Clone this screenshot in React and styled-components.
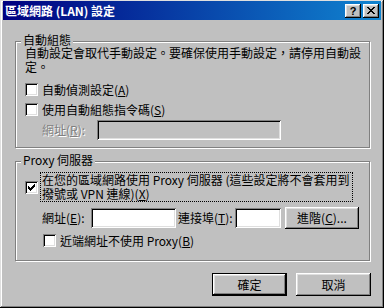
import React from "react";
import styled, { createGlobalStyle, css } from "styled-components";

const GlobalStyle = createGlobalStyle`
  html, body {
    margin: 0;
    padding: 0;
    background: #c0c0c0;
  }
  body {
    font-family: "Noto Sans CJK TC", "Liberation Sans", sans-serif;
    font-size: 12px;
    color: #000;
  }
`;

const raised = css`
  box-shadow: inset -1px -1px #000, inset 1px 1px #fff, inset -2px -2px #808080,
    inset 2px 2px #dfdfdf;
`;

const sunken = css`
  box-shadow: inset 1px 1px #808080, inset -1px -1px #fff, inset 2px 2px #000,
    inset -2px -2px #dfdfdf;
`;

const Window = styled.div`
  width: 384px;
  height: 308px;
  box-sizing: border-box;
  padding: 1px 3px 3px 3px;
  background: #c0c0c0;
  box-shadow: inset -1px -1px #000, inset 1px 1px #dfdfdf, inset -2px -2px #808080,
    inset 2px 2px #fff;
  display: flex;
  flex-direction: column;
`;

const TitleBar = styled.div`
  height: 19px;
  display: flex;
  align-items: center;
  padding: 0 2px 0 2px;
  background: linear-gradient(to right, #000080, #1084d0);
  color: #fff;
`;

const Title = styled.span`
  flex: 1;
  font-weight: bold;
  line-height: 19px;
`;

const CaptionButton = styled.div`
  width: 16px;
  height: 14px;
  box-sizing: border-box;
  background: #c0c0c0;
  ${raised};
  display: flex;
  align-items: center;
  justify-content: center;
  margin-left: ${(p) => (p.$gap ? "2px" : "0")};
  color: #000;
  font-family: "Liberation Sans", sans-serif;
  font-weight: bold;
  font-size: 11px;
  line-height: 14px;
`;

const Content = styled.div`
  display: flex;
  flex-direction: column;
  padding-left: 12px;
`;

const Group = styled.div`
  position: relative;
  width: 355px;
  height: ${(p) => p.$height}px;
  margin-top: ${(p) => p.$top}px;
  box-sizing: border-box;
  border: 1px solid #808080;
  box-shadow: inset 1px 1px #fff, 1px 1px #fff;
  padding: ${(p) => p.$padTop}px 0 0 9px;
  display: flex;
  flex-direction: column;
`;

const Legend = styled.span`
  position: absolute;
  top: -9px;
  left: 5px;
  padding: 0 2px;
  background: #c0c0c0;
  line-height: 14px;
`;

const Note = styled.p`
  margin: 0;
  line-height: 14px;
  white-space: nowrap;
`;

const Row = styled.div`
  display: flex;
  align-items: center;
  height: ${(p) => p.$height || 20}px;
  margin-top: ${(p) => p.$top || 0}px;
  padding-left: ${(p) => p.$indent || 0}px;
  gap: ${(p) => p.$gap ?? 4}px;
`;

const Box = styled.span`
  flex: none;
  width: 13px;
  height: 13px;
  box-sizing: border-box;
  background: #fff;
  ${sunken};
  display: flex;
  align-items: center;
  justify-content: center;
`;

const FocusLabel = styled.span`
  border: 1px dotted #000;
  padding: 0 2px 0 1px;
  line-height: 14px;
  white-space: nowrap;
`;

const FieldLabel = styled.span`
  width: ${(p) => p.$width}px;
  flex: none;
  line-height: 14px;
  white-space: nowrap;
  ${(p) =>
    p.$disabled &&
    css`
      color: #808080;
      text-shadow: 1px 1px #fff;
    `}
`;

const Field = styled.div`
  flex: none;
  width: ${(p) => p.$width}px;
  height: 20px;
  box-sizing: border-box;
  background: ${(p) => (p.$disabled ? "#c0c0c0" : "#fff")};
  ${sunken};
  margin-left: ${(p) => p.$left || 0}px;
`;

const PushButton = styled.button`
  flex: none;
  width: ${(p) => p.$width || 75}px;
  height: ${(p) => p.$height || 23}px;
  margin-left: ${(p) => p.$left || 0}px;
  padding: 0;
  border: none;
  background: #c0c0c0;
  font: inherit;
  color: #000;
  line-height: 14px;
  ${raised};
  ${(p) =>
    p.$default &&
    css`
      box-shadow: inset 0 0 0 1px #000, inset -2px -2px #000, inset 2px 2px #fff,
        inset -3px -3px #808080, inset 3px 3px #dfdfdf;
    `}
`;

const ButtonRow = styled.div`
  display: flex;
  justify-content: flex-end;
  gap: 9px;
  margin-top: 12px;
  padding-right: 10px;
`;

const CheckMark = () => (
  <svg width="7" height="7" viewBox="0 0 7 7" shapeRendering="crispEdges">
    <path
      fill="#000"
      d="M6 0h1v1h-1zM5 1h2v1h-2zM0 2h1v1h-1zM4 2h3v1h-3zM0 3h2v1h-2zM3 3h3v1h-3zM0 4h5v1h-5zM1 5h3v1h-3zM2 6h1v1h-1z"
    />
  </svg>
);

const CloseGlyph = () => (
  <svg width="8" height="7" viewBox="0 0 8 7" shapeRendering="crispEdges">
    <path
      fill="#000"
      d="M0 0h2v1h-2zM6 0h2v1h-2zM1 1h2v1h-2zM5 1h2v1h-2zM2 2h4v1h-4zM3 3h2v1h-2zM2 4h4v1h-4zM1 5h2v1h-2zM5 5h2v1h-2zM0 6h2v1h-2zM6 6h2v1h-2z"
    />
  </svg>
);

const Checkbox = ({ checked }) => <Box>{checked && <CheckMark />}</Box>;

export default function App() {
  return (
    <>
      <GlobalStyle />
      <Window>
        <TitleBar>
          <Title>區域網路 (LAN) 設定</Title>
          <CaptionButton>?</CaptionButton>
          <CaptionButton $gap>
            <CloseGlyph />
          </CaptionButton>
        </TitleBar>
        <Content>
          <Group $top={21} $height={107} $padTop={4}>
            <Legend>自動組態</Legend>
            <Note>
              自動設定會取代手動設定。要確保使用手動設定，請停用自動設
              <br />
              定。
            </Note>
            <Row $top={5}>
              <Checkbox />
              <span>
                自動偵測設定(<u>A</u>)
              </span>
            </Row>
            <Row>
              <Checkbox />
              <span>
                使用自動組態指令碼(<u>S</u>)
              </span>
            </Row>
            <Row $top={1} $indent={17} $gap={0}>
              <FieldLabel $width={55} $disabled>
                網址(<u>R</u>):
              </FieldLabel>
              <Field $width={184} $disabled />
            </Row>
          </Group>
          <Group $top={13} $height={100} $padTop={10}>
            <Legend>Proxy 伺服器</Legend>
            <Row $height={30} $gap={2}>
              <Checkbox checked />
              <FocusLabel>
                在您的區域網路使用 Proxy 伺服器 (這些設定將不會套用到
                <br />
                撥號或 VPN 連線)(<u>X</u>)
              </FocusLabel>
            </Row>
            <Row $height={22} $top={5} $indent={17} $gap={0}>
              <FieldLabel $width={49}>
                網址(<u>E</u>):
              </FieldLabel>
              <Field $width={85} />
              <FieldLabel $width={57} style={{ marginLeft: 2 }}>
                連接埠(<u>T</u>):
              </FieldLabel>
              <Field $width={46} />
              <PushButton $width={74} $height={22} $left={4}>
                進階(<u>C</u>)...
              </PushButton>
            </Row>
            <Row $top={1} $indent={18}>
              <Checkbox />
              <span>
                近端網址不使用 Proxy(<u>B</u>)
              </span>
            </Row>
          </Group>
          <ButtonRow>
            <PushButton $default>確定</PushButton>
            <PushButton>取消</PushButton>
          </ButtonRow>
        </Content>
      </Window>
    </>
  );
}
